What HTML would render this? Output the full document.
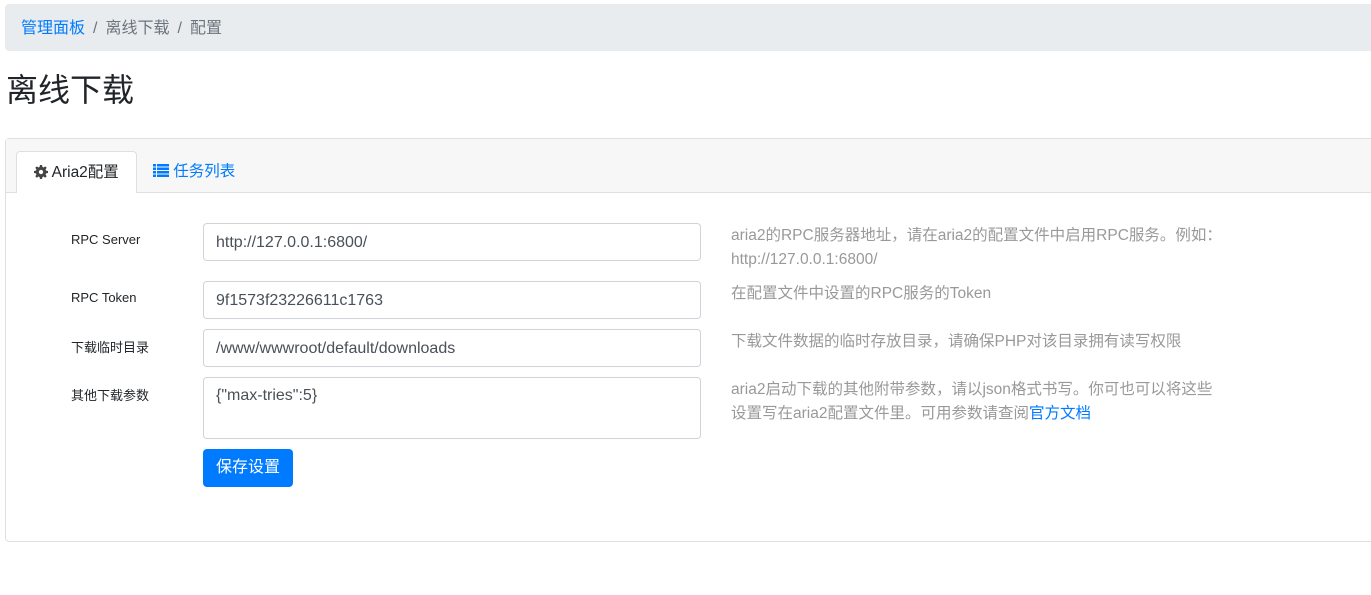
<!DOCTYPE html>
<html><head><meta charset="utf-8"><style>
*{box-sizing:border-box}
body{margin:0;font-family:"Liberation Sans","Noto Sans CJK SC",sans-serif;color:#212529;background:#fff;width:1371px;height:595px;overflow:hidden;position:relative}
.bc{position:absolute;left:5px;top:4px;width:1380px;height:47px;background:#e9ecef;border-radius:4px;font-size:16px;line-height:49px;padding-left:16px;color:#6c757d}
.bc a{color:#007bff}
.bc .s{padding:0 8px}
h1{position:absolute;left:6px;top:68px;margin:0;font-size:32px;font-weight:400;line-height:44px}
.card{position:absolute;left:5px;top:138px;width:1400px;height:404px;border:1px solid #dfdfdf;border-radius:4px}
.ch{height:54px;background:#f7f7f7;border-bottom:1px solid #dfdfdf;position:relative}
.tab{position:absolute;top:12px;height:42px;line-height:42px;font-size:15.5px}
.t1{left:10px;width:121px;background:#fff;border:1px solid #dfdfdf;border-bottom:none;border-radius:4px 4px 0 0;text-align:center}
.t2{left:147px;color:#007bff}
.lbl{position:absolute;left:71px;font-size:13px}
.inp{position:absolute;left:203px;width:498px;height:38px;border:1px solid #ced4da;border-radius:4px;padding:0 12px;line-height:38px;font-size:16px;color:#495057}
.help{position:absolute;left:731px;font-size:15.5px;color:#999;line-height:24px}
.btn{position:absolute;left:203px;top:449px;width:90px;height:38px;background:#007bff;color:#fff;border-radius:4px;font-size:16px;text-align:center;line-height:38px}
</style></head><body>
<div class="bc"><a>管理面板</a><span class="s">/</span>离线下载<span class="s">/</span>配置</div>
<h1>离线下载</h1>
<div class="card"><div class="ch">
<div class="tab t1"><svg width="14" height="14" viewBox="0 0 16 16" style="vertical-align:-2px"><path fill="#444" d="M6.8 0h2.4l.4 2.2 1.3.6 1.9-1.3 1.7 1.7-1.3 1.9.6 1.3 2.2.4v2.4l-2.2.4-.6 1.3 1.3 1.9-1.7 1.7-1.9-1.3-1.3.6-.4 2.2H6.8l-.4-2.2-1.3-.6-1.9 1.3-1.7-1.7 1.3-1.9-.6-1.300L0 9.2V6.8l2.2-.4.6-1.3-1.3-1.9 1.7-1.7 1.9 1.3 1.3-.6zM8 5.5a2.5 2.5 0 100 5 2.5 2.5 0 000-5z"/></svg> Aria2配置</div>
<div class="tab t2"><svg width="16" height="13" viewBox="0 0 16 13" style="vertical-align:-1px"><g fill="#007bff"><rect x="0" y="0" width="3" height="2.5"/><rect x="4" y="0" width="12" height="2.5"/><rect x="0" y="3.5" width="3" height="2.5"/><rect x="4" y="3.5" width="12" height="2.5"/><rect x="0" y="7" width="3" height="2.5"/><rect x="4" y="7" width="12" height="2.5"/><rect x="0" y="10.5" width="3" height="2.5"/><rect x="4" y="10.5" width="12" height="2.5"/></g></svg> 任务列表</div>
</div></div>
<div class="lbl" style="top:232px">RPC Server</div>
<div class="inp" style="top:223px">http://127.0.0.1:6800/</div>
<div class="help" style="top:224px">aria2的RPC服务器地址，请在aria2的配置文件中启用RPC服务。例如：<br>http://127.0.0.1:6800/</div>
<div class="lbl" style="top:290px">RPC Token</div>
<div class="inp" style="top:281px">9f1573f23226611c1763</div>
<div class="help" style="top:282px">在配置文件中设置的RPC服务的Token</div>
<div class="lbl" style="top:337px">下载临时目录</div>
<div class="inp" style="top:329px">/www/wwwroot/default/downloads</div>
<div class="help" style="top:330px">下载文件数据的临时存放目录，请确保PHP对该目录拥有读写权限</div>
<div class="lbl" style="top:385px">其他下载参数</div>
<div class="inp" style="top:377px;height:62px;line-height:36px">{"max-tries":5}</div>
<div class="help" style="top:378px">aria2启动下载的其他附带参数，请以json格式书写。你可也可以将这些<br>设置写在aria2配置文件里。可用参数请查阅<span style="color:#007bff">官方文档</span></div>
<div class="btn">保存设置</div>
</body></html>
